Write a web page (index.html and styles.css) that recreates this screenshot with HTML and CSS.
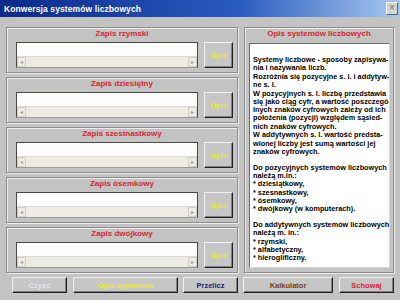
FILE: index.html
```html
<!DOCTYPE html>
<html lang="pl">
<head>
    <meta charset="UTF-8">
    <title>Konwersja systemów liczbowych</title>
    <link rel="stylesheet" href="styles.css">
</head>
<body>
    <div class="window">
        <div class="titlebar">
            <span class="title">Konwersja systemów liczbowych</span>
            <span class="close">×</span>
        </div>

        <div class="main">
            <div class="left">
                <div class="group">
                    <div class="group-title">Zapis rzymski</div>
                    <div class="row">
                        <div class="field">
                            <div class="field-text"></div>
                            <div class="hscroll"><span class="arrow">◂</span><span class="track"></span><span class="arrow">▸</span></div>
                        </div>
                        <button class="opis">Opis</button>
                    </div>
                </div>
                <div class="group">
                    <div class="group-title">Zapis dziesiętny</div>
                    <div class="row">
                        <div class="field">
                            <div class="field-text"></div>
                            <div class="hscroll"><span class="arrow">◂</span><span class="track"></span><span class="arrow">▸</span></div>
                        </div>
                        <button class="opis">Opis</button>
                    </div>
                </div>
                <div class="group">
                    <div class="group-title">Zapis szestnastkowy</div>
                    <div class="row">
                        <div class="field">
                            <div class="field-text"></div>
                            <div class="hscroll"><span class="arrow">◂</span><span class="track"></span><span class="arrow">▸</span></div>
                        </div>
                        <button class="opis">Opis</button>
                    </div>
                </div>
                <div class="group">
                    <div class="group-title">Zapis ósemkowy</div>
                    <div class="row">
                        <div class="field">
                            <div class="field-text"></div>
                            <div class="hscroll"><span class="arrow">◂</span><span class="track"></span><span class="arrow">▸</span></div>
                        </div>
                        <button class="opis">Opis</button>
                    </div>
                </div>
                <div class="group">
                    <div class="group-title">Zapis dwójkowy</div>
                    <div class="row">
                        <div class="field">
                            <div class="field-text"></div>
                            <div class="hscroll"><span class="arrow">◂</span><span class="track"></span><span class="arrow">▸</span></div>
                        </div>
                        <button class="opis">Opis</button>
                    </div>
                </div>
            </div>

            <div class="right">
                <div class="group-title">Opis systemów liczbowych</div>
                <div class="desc">
                    <p>Systemy liczbowe - sposoby zapisywa-<br>nia i nazywania liczb.</p>
                    <p>Rozróżnia się pozycyjne s. l. i addytyw-<br>ne s. l.</p>
                    <p>W pozycyjnych s. l. liczbę przedstawia<br>się jako ciąg cyfr, a wartość poszczegó-<br>lnych znaków cyfrowych zależy od ich<br>położenia (pozycji) względem sąsied-<br>nich znaków cyfrowych.</p>
                    <p>W addytywnych s. l. wartość predsta-<br>wionej liczby jest sumą wartości jej<br>znaków cyfrowych.</p>
                    <p class="gap">Do pozycyjnych systemów liczbowych<br>należą m.in.:<br>* dziesiątkowy,<br>* szesnastkowy,<br>* ósemkowy,<br>* dwójkowy (w komputerach).</p>
                    <p class="gap">Do addytywnych systemów liczbowych<br>należą m. in.:<br>* rzymski,<br>* alfabetyczny,<br>* hieroglificzny.</p>
                </div>
            </div>
        </div>

        <div class="buttons">
            <button class="btn btn-clear">Czyść</button>
            <button class="btn btn-opis">Opis systemów</button>
            <button class="btn btn-calc">Przelicz</button>
            <button class="btn btn-kalk">Kalkulator</button>
            <button class="btn btn-hide">Schowaj</button>
        </div>
    </div>
</body>
</html>
```

FILE: styles.css
```css
body {
    margin: 0;
    font-family: 'Liberation Sans', Arial, sans-serif;
    background-color: #c3c3c3;
}
.window {
    width: 400px;
    height: 300px;
    background-color: #c3c3c3;
    display: flex;
    flex-direction: column;
    overflow: hidden;
}
.titlebar {
    height: 17px;
    display: flex;
    align-items: center;
    justify-content: space-between;
    padding: 0 2px 0 4px;
    background: linear-gradient(to right, #0a2a8a, #2a5cc0 60%, #a8c8f0);
}
.title {
    color: #fff;
    font-weight: bold;
    font-size: 8.5px;
    letter-spacing: 0.1px;
}
.close {
    width: 10px;
    height: 11px;
    background-color: #d4d4d4;
    border: 1px solid #fff;
    border-right-color: #606060;
    border-bottom-color: #606060;
    color: #707070;
    font-size: 10px;
    line-height: 10px;
    text-align: center;
}
.main {
    display: flex;
    gap: 6px;
    margin-top: 10px;
    padding-left: 6px;
}
.left {
    width: 232px;
    display: flex;
    flex-direction: column;
    gap: 4px;
}
.group, .right {
    box-sizing: border-box;
    border: 1px solid #8c8c8c;
    box-shadow: inset 1px 1px 0 #ececec, 1px 1px 0 #ececec;
}
.group {
    height: 46px;
}
.group-title {
    height: 10px;
    margin-top: 1px;
    line-height: 10px;
    text-align: center;
    color: #d8282c;
    font-weight: bold;
    font-size: 8px;
}
.row {
    display: flex;
    gap: 6px;
    margin-top: 3px;
    padding-left: 9px;
}
.field {
    width: 182px;
    height: 26px;
    box-sizing: border-box;
    border: 1px solid #4a4a4a;
    border-bottom-color: #9a9a9a;
    display: flex;
    flex-direction: column;
}
.field-text {
    height: 14px;
    background-color: #fcfcfa;
}
.hscroll {
    flex: 1;
    display: flex;
    background-color: #ecece4;
    border-top: 1px solid #dcdcd4;
}
.arrow {
    width: 9px;
    box-sizing: border-box;
    border: 1px solid #d0d0c8;
    color: #9a9a9a;
    font-size: 6px;
    line-height: 8px;
    text-align: center;
}
.track {
    flex: 1;
}
.opis {
    width: 29px;
    height: 26px;
    padding: 0;
    background-color: #c6c6c6;
    border: 1px solid #f0f0f0;
    border-right-color: #202020;
    border-bottom-color: #202020;
    box-shadow: inset -1px -1px 0 #808080;
    color: #e8e830;
    font-family: 'Liberation Sans', Arial, sans-serif;
    font-weight: bold;
    font-size: 7.5px;
}
.right {
    width: 150px;
    height: 246px;
}
.desc {
    box-sizing: border-box;
    width: 141px;
    height: 225px;
    margin: 4px 0 0 4px;
    padding: 12px 0 0 3px;
    background-color: #fff;
    border: 1px solid #6a6a6a;
    border-right-color: #d8d8d8;
    border-bottom-color: #d8d8d8;
    font-weight: bold;
    font-size: 7.3px;
    line-height: 8.2px;
    white-space: nowrap;
    overflow: hidden;
}
.desc p {
    margin: 0 0 0.5px;
}
.desc p.gap {
    margin-top: 8px;
}
.buttons {
    display: flex;
    gap: 5px;
    margin-top: 4px;
    padding-left: 12px;
}
.btn {
    height: 16px;
    padding: 0;
    background-color: #c6c6c6;
    border: 1px solid #f0f0f0;
    border-right-color: #202020;
    border-bottom-color: #202020;
    box-shadow: inset -1px -1px 0 #808080;
    font-family: 'Liberation Sans', Arial, sans-serif;
    font-weight: bold;
    font-size: 7.5px;
}
.btn-clear {
    width: 55px;
    color: #e4e4e4;
    margin-right: 1px;
}
.btn-opis {
    width: 105px;
    color: #e8e830;
}
.btn-calc {
    width: 55px;
    color: #202080;
}
.btn-kalk {
    width: 90px;
    color: #7a4020;
    margin-right: 1px;
}
.btn-hide {
    width: 55px;
    color: #e02030;
}
```
